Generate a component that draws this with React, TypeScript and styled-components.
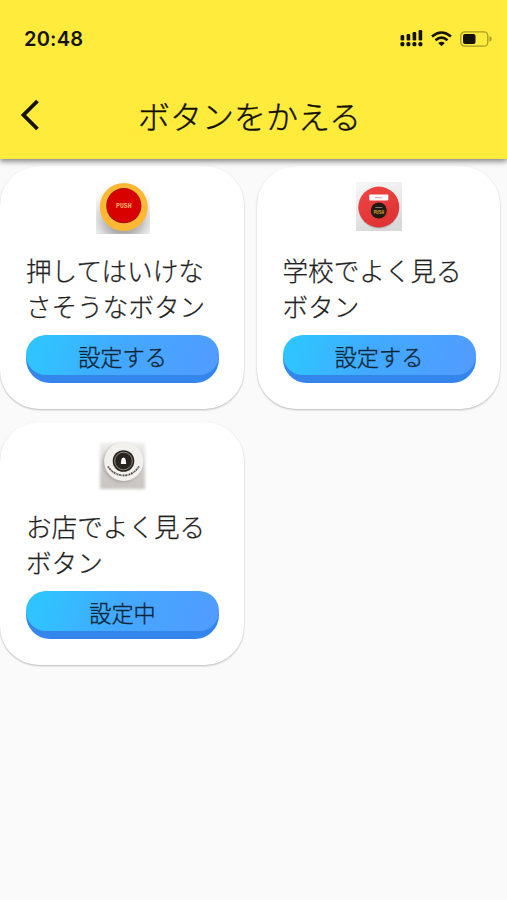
import React from "react";
import styled, { createGlobalStyle } from "styled-components";

const GlobalStyle = createGlobalStyle`
  * { box-sizing: border-box; }
  body { margin: 0; background: #fafafa; }
`;

const Screen = styled.div`
  width: 507px;
  height: 900px;
  overflow: hidden;
  display: flex;
  flex-direction: column;
  background: #fafafa;
  color: #222;
  font-family: "Noto Sans CJK JP", sans-serif;
  font-weight: 300;
  -webkit-text-stroke: 0.25px currentColor;
`;

const Header = styled.header`
  position: relative;
  flex: none;
  height: 159px;
  background: #ffeb3b;
  box-shadow: 0 2px 5px rgba(0, 0, 0, 0.4), 0 4px 6px rgba(0, 0, 0, 0.12);
`;

const StatusBar = styled.div`
  height: 72px;
  padding: 5px 15px 0 24px;
  display: flex;
  align-items: center;
  justify-content: space-between;
`;

const Clock = styled.time`
  font: 600 20px/24px Inter, sans-serif;
  letter-spacing: 0.2px;
  color: #14130a;
  -webkit-text-stroke: 0;
`;

const StatusIcons = styled.div`
  display: flex;
  align-items: center;
  gap: 8px;
  svg { display: block; }
`;

const TitleBar = styled.div`
  height: 87px;
  padding: 0 0 2px 20px;
  display: flex;
  align-items: center;
`;

const BackButton = styled.button`
  width: 20px;
  height: 32px;
  padding: 0;
  border: 0;
  background: none;
  svg { display: block; }
`;

const Title = styled.h1`
  margin: 0 0 0 98px;
  font-size: 32px;
  line-height: 44px;
  font-weight: 300;
  color: #100f03;
  white-space: nowrap;
  -webkit-text-stroke-width: 0.35px;
`;

const CardGrid = styled.main`
  display: grid;
  grid-template-columns: 244px 243.5px;
  grid-auto-rows: 243px;
  column-gap: 12.5px;
  row-gap: 13px;
  padding-top: 7px;
`;

const Card = styled.article`
  display: flex;
  flex-direction: column;
  padding: 14px 25px 26px 26px;
  border-radius: 39px;
  background: #fff;
  box-shadow: 0 1px 2px rgba(0, 0, 0, 0.26);
`;

const Picture = styled.div`
  height: 72px;
  display: flex;
  justify-content: center;
  svg { display: block; }
`;

const Name = styled.h2`
  width: 190px;
  height: 83px;
  margin: 0;
  font-size: 25.6px;
  line-height: 36px;
  font-weight: 300;
  white-space: pre-line;
`;

const SetButton = styled.button`
  flex: none;
  width: 193px;
  height: 48px;
  padding: 0 0 8px;
  border: 0;
  border-radius: 24px;
  background: #3485ec;
`;

const ButtonFace = styled.span`
  display: flex;
  height: 40px;
  align-items: center;
  justify-content: center;
  padding-top: 1px;
  border-radius: 20px;
  background: linear-gradient(110deg, #2fc4ff 8%, #42a9ff 48%, #529bff 98%);
  color: #0e2638;
  font: 300 22.2px/32px "Noto Sans CJK JP", sans-serif;
  -webkit-text-stroke: 0.35px currentColor;
`;

const Signal = () => (
  <svg width="23" height="17" viewBox="0 0 23 17" fill="#14130a">
    {[0, 1, 2, 3].map((i) => (
      <React.Fragment key={i}>
        <rect x={i * 6 + 0.6} y={[5, 4, 2, 0][i]} width="3.6" height={[5.5, 6.5, 8.5, 10.5][i]} rx="1.2" />
        <rect x={i * 6 + 0.4} y="12" width="4" height="4.3" rx="1.6" />
      </React.Fragment>
    ))}
  </svg>
);

const Wifi = () => (
  <svg width="21" height="16" viewBox="0 0 21 16" fill="none" stroke="#14130a" strokeWidth="2.6">
    <path d="M1 5.5Q10.5-2.5 20 5.5M4.5 9.2Q10.5 4 16.5 9.2" />
    <path d="M7.2 12q3.3-2.7 6.6 0l-3.3 3.3z" fill="#14130a" stroke="none" />
  </svg>
);

const Battery = () => (
  <svg width="32" height="16" viewBox="0 0 32 16">
    <rect x=".8" y=".8" width="27" height="14.4" rx="4" fill="none" stroke="#a79b29" strokeWidth="1.3" />
    <rect x="3" y="3" width="12.5" height="10" rx="2" fill="#14130a" />
    <path d="M29.5 5.3q2.2.7 2.2 2.7t-2.2 2.7z" fill="#a79b29" />
  </svg>
);

const DangerButton = () => (
  <svg width="54" height="56" viewBox="0 0 54 56">
    <defs>
      <radialGradient id="dangerShade" cx=".5" cy=".62" r=".62">
        <stop offset=".5" stopColor="#8e8e8e" />
        <stop offset=".82" stopColor="#d2d2d2" />
        <stop offset="1" stopColor="#ececec" />
      </radialGradient>
      <linearGradient id="dangerFade" x2="0" y2="1">
        <stop offset="0" stopColor="#fff" />
        <stop offset=".5" stopColor="#fff" stopOpacity=".55" />
        <stop offset="1" stopColor="#fff" stopOpacity=".1" />
      </linearGradient>
    </defs>
    <rect y="2" width="54" height="52" fill="url(#dangerShade)" />
    <rect width="54" height="56" fill="url(#dangerFade)" />
    <circle cx="27.8" cy="27" r="24" fill="#fdb833" />
    <circle cx="27.8" cy="25.7" r="17.6" fill="#9d1605" />
    <circle cx="27.8" cy="25.5" r="16.7" fill="#d90000" />
    <text x="27.8" y="28" fill="#ffb06c" stroke="none" fontFamily="Liberation Mono" fontWeight="700" fontSize="6.5" textAnchor="middle">PUSH</text>
  </svg>
);

const SchoolButton = () => (
  <svg width="48" height="52" viewBox="0 0 48 52">
    <defs>
      <linearGradient id="schoolPlate" x2=".3" y2="1">
        <stop offset="0" stopColor="#f7f7f7" />
        <stop offset=".6" stopColor="#e7e7e7" />
        <stop offset="1" stopColor="#d9d9d9" />
      </linearGradient>
      <linearGradient id="schoolRed" x2=".5" y2="1">
        <stop stopColor="#ef4543" />
        <stop offset="1" stopColor="#df3433" />
      </linearGradient>
    </defs>
    <rect x="1" y="2" width="46" height="49" fill="url(#schoolPlate)" />
    <circle cx="23.8" cy="28" r="20.5" fill="#b5b5b5" />
    <circle cx="23.8" cy="27" r="20.4" fill="url(#schoolRed)" />
    <rect x="14.3" y="14.5" width="19" height="6" rx=".7" fill="#fff" />
    <path d="M20.3 17.7h7" stroke="#ec7774" strokeWidth="1" strokeDasharray="1.5 .5" />
    <circle cx="23.8" cy="30.5" r="8" fill="#211b14" />
    <path d="M20.3 27.5h7" stroke="#777" strokeWidth="1" />
    <text x="23.8" y="33.5" fill="#d49b2c" stroke="none" fontFamily="Liberation Mono" fontWeight="700" fontSize="4.5" textAnchor="middle">PUSH</text>
  </svg>
);

const ShopButton = () => (
  <svg width="50" height="58" viewBox="0 0 50 58">
    <defs>
      <linearGradient id="shopPlate" x2="0" y2="1">
        <stop stopColor="#efefed" />
        <stop offset=".6" stopColor="#cfcdca" />
        <stop offset="1" stopColor="#c7c4c0" />
      </linearGradient>
      <filter id="shopBlur"><feGaussianBlur stdDeviation="1.8" /></filter>
    </defs>
    <rect x="2" y="7" width="45" height="46" fill="url(#shopPlate)" filter="url(#shopBlur)" />
    <circle cx="24.5" cy="27" r="19.6" fill="#aaa7a3" filter="url(#shopBlur)" />
    <circle cx="25.7" cy="25.5" r="19.6" fill="#f2f1ed" />
    <circle cx="25.5" cy="25" r="10.8" fill="#28251f" />
    <circle cx="25.5" cy="25" r="8.8" fill="none" stroke="#aaa38e" strokeWidth=".8" />
    <path d="M22.8 28l.5-4q.4-2.5 2.2-2.5t2.2 2.5l.5 4z" fill="#fff" />
    <path d="M10 30.5Q15 38.5 25 39.5Q35 39.5 41 30.5" fill="none" stroke="#54514c" strokeWidth="1.8" strokeDasharray="1.4 .7 2 .6 .8 .5" />
  </svg>
);

const cards = [
  { name: "押してはいけな\nさそうなボタン", action: "設定する", Art: DangerButton },
  { name: "学校でよく見る\nボタン", action: "設定する", Art: SchoolButton },
  { name: "お店でよく見る\nボタン", action: "設定中", Art: ShopButton },
];

export default function App() {
  return (
    <Screen>
      <GlobalStyle />
      <Header>
        <StatusBar>
          <Clock>20:48</Clock>
          <StatusIcons><Signal /><Wifi /><Battery /></StatusIcons>
        </StatusBar>
        <TitleBar>
          <BackButton aria-label="もどる">
            <svg width="20" height="32" viewBox="0 0 20 32" fill="none" stroke="#14130a" strokeWidth="3.8">
              <path d="M17.5 2L3.5 16l14 14" />
            </svg>
          </BackButton>
          <Title>ボタンをかえる</Title>
        </TitleBar>
      </Header>
      <CardGrid>
        {cards.map(({ name, action, Art }) => (
          <Card key={name}>
            <Picture><Art /></Picture>
            <Name>{name}</Name>
            <SetButton><ButtonFace>{action}</ButtonFace></SetButton>
          </Card>
        ))}
      </CardGrid>
    </Screen>
  );
}
